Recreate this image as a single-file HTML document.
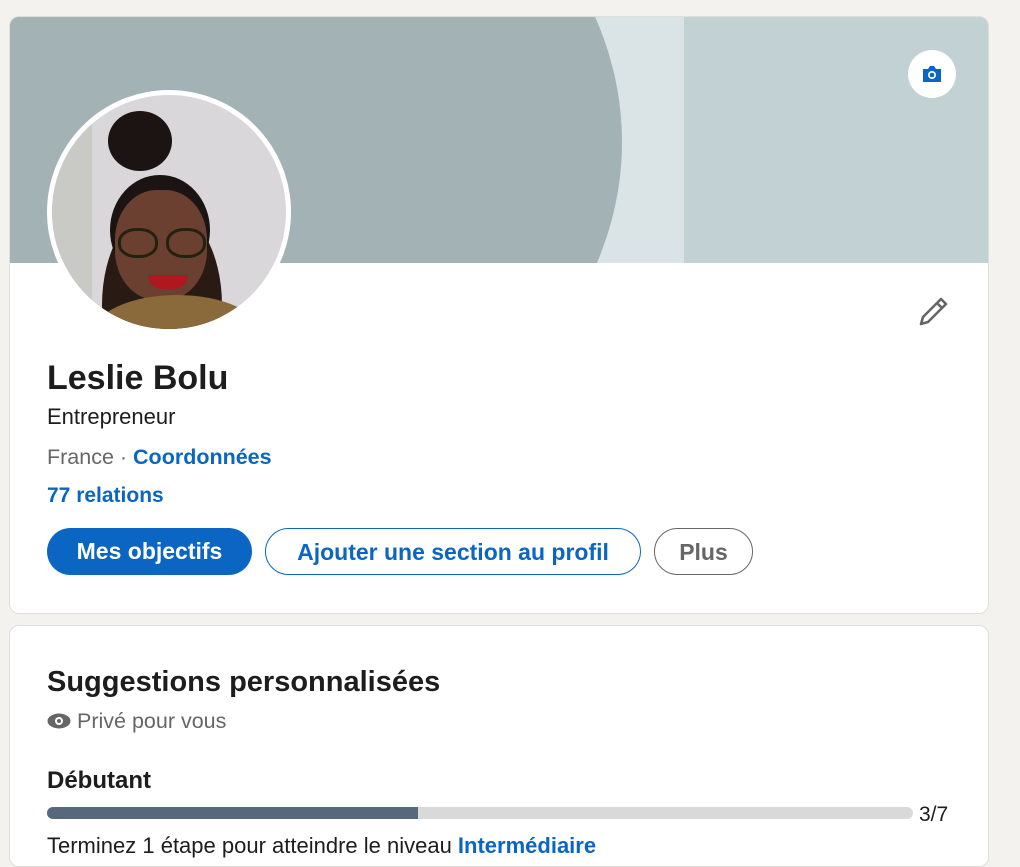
<!DOCTYPE html>
<html><head><meta charset="utf-8"><style>
body{margin:0;background:#f4f2ee;font-family:"Liberation Sans",Arial,sans-serif;width:1020px;height:851px;overflow:hidden;position:relative}
.card{position:absolute;left:9px;width:978px;background:#fff;border:1px solid #dfdedb;border-radius:10px;overflow:hidden}
.banner{position:absolute;left:0;top:0;width:978px;height:246px;background:#c1d1d4;overflow:hidden}
.abs{position:absolute;white-space:nowrap}
.btn{position:absolute;top:511px;height:47px;border-radius:24px;font-size:23px;font-weight:bold;line-height:47px;text-align:center;box-sizing:border-box}
</style></head><body>
<div class="card" style="top:16px;height:596px">
 <div class="banner">
  <div class="abs" style="left:580px;top:0;width:94px;height:246px;background:#dae3e5"></div>
  <div class="abs" style="left:-600px;top:-300px;width:1212px;height:850px;border-radius:50%;background:#a3b3b5"></div>
  <div class="abs" style="left:898px;top:33px;width:48px;height:48px;border-radius:50%;background:#fff"></div>
  <svg class="abs" style="left:911px;top:47px" width="22" height="20" viewBox="0 0 22 20"><path d="M2 5h5l2-3h4l2 3h5v13H2z" fill="#0a66c2"/><circle cx="11" cy="11" r="4" fill="#fff"/><circle cx="11" cy="11" r="2.3" fill="#0a66c2"/></svg>
 </div>
 <div class="abs" style="left:37px;top:73px;width:244px;height:244px;border-radius:50%;background:#fff"></div>
 <div class="abs" style="left:42px;top:78px;width:234px;height:234px;border-radius:50%;overflow:hidden;background:#d9d7d9">
  <div class="abs" style="left:0;top:0;width:40px;height:234px;background:#c9c9c6"></div>
  <div class="abs" style="left:50px;top:110px;width:120px;height:200px;border-radius:50%;background:#2a1a14"></div>
  <div class="abs" style="left:58px;top:80px;width:100px;height:110px;border-radius:50%;background:#1b1412"></div>
  <div class="abs" style="left:56px;top:16px;width:64px;height:60px;border-radius:50%;background:#1b1412"></div>
  <div class="abs" style="left:63px;top:95px;width:92px;height:110px;border-radius:45%;background:#6b4030"></div>
  <div class="abs" style="left:66px;top:133px;width:34px;height:24px;border:3px solid #221;border-radius:45%"></div>
  <div class="abs" style="left:114px;top:133px;width:34px;height:24px;border:3px solid #221;border-radius:45%"></div>
  <div class="abs" style="left:96px;top:180px;width:40px;height:14px;border-radius:0 0 20px 20px;background:#b01820"></div>
  <div class="abs" style="left:40px;top:200px;width:170px;height:80px;border-radius:50% 50% 0 0;background:#8a6a3a"></div>
 </div>
 <svg class="abs" style="left:906px;top:278px" width="34" height="34" viewBox="0 0 34 34"><path d="M25 4l5 5-18 18-7 2 2-7z" fill="none" stroke="#666" stroke-width="2.6" stroke-linejoin="round"/><path d="M21 8l5 5" stroke="#666" stroke-width="2.6"/></svg>
 <div class="abs" style="left:37px;top:342px;font-size:34px;font-weight:bold;color:#1d1d1d">Leslie Bolu</div>
 <div class="abs" style="left:37px;top:387px;font-size:22px;color:#1d1d1d">Entrepreneur</div>
 <div class="abs" style="left:37px;top:428px;font-size:21.5px;color:#666">France · <b style="color:#0a66c2">Coordonnées</b></div>
 <div class="abs" style="left:37px;top:467px;font-size:21px;color:#0a66c2;font-weight:bold">77 relations</div>
 <div class="btn" style="left:37px;width:205px;background:#0a66c2;color:#fff">Mes objectifs</div>
 <div class="btn" style="left:255px;width:376px;border:1.5px solid #0a66c2;color:#0a66c2">Ajouter une section au profil</div>
 <div class="btn" style="left:644px;width:99px;border:1.5px solid #666;color:#666">Plus</div>
</div>
<div class="card" style="top:625px;height:240px">
 <div class="abs" style="left:37px;top:40px;font-size:29px;font-weight:bold;color:#1d1d1d">Suggestions personnalisées</div>
 <svg class="abs" style="left:37px;top:87px" width="24" height="16" viewBox="0 0 24 16"><ellipse cx="12" cy="8" rx="11.5" ry="7.5" fill="#666"/><circle cx="12" cy="8" r="4" fill="#fff"/><circle cx="12" cy="8" r="2" fill="#666"/></svg>
 <div class="abs" style="left:67px;top:83px;font-size:21.5px;color:#666">Privé pour vous</div>
 <div class="abs" style="left:37px;top:141px;font-size:24px;font-weight:bold;color:#1d1d1d">Débutant</div>
 <div class="abs" style="left:37px;top:181px;width:866px;height:12px;border-radius:6px;background:#d9d9d9;overflow:hidden"><div style="width:371px;height:12px;background:#56687a"></div></div>
 <div class="abs" style="left:909px;top:177px;font-size:21px;color:#1d1d1d">3/7</div>
 <div class="abs" style="left:37px;top:207px;font-size:22px;color:#1d1d1d">Terminez 1 étape pour atteindre le niveau <b style="color:#0a66c2">Intermédiaire</b></div>
</div>
</body></html>
